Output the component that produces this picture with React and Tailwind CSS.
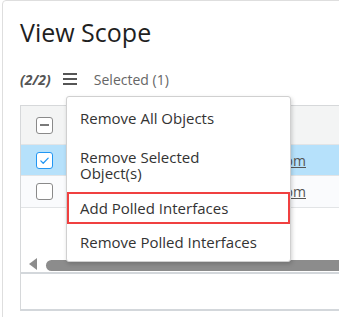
import React from "react";

const font = { fontFamily: '"Open Sans", "Noto Sans", "Liberation Sans", sans-serif' };

const Box = ({ state }) => {
  if (state === "checked") {
    return (
      <span className="flex h-[17px] w-[17px] items-center justify-center rounded-[3px] border-[1.5px] border-[#2196f3] bg-white">
        <svg viewBox="0 0 12 12" className="h-[11px] w-[11px]" fill="none" stroke="#2196f3" strokeWidth="1.4" strokeLinecap="round" strokeLinejoin="round">
          <path d="M2 6.4 4.6 9 10 3.4" />
        </svg>
      </span>
    );
  }
  return (
    <span className="flex h-[17px] w-[17px] items-center justify-center rounded-[3px] border-[1.5px] border-[#8a8a8a] bg-white">
      {state === "mixed" && <span className="h-[2px] w-[9px] bg-[#7a7a7a]" />}
    </span>
  );
};

const Row = ({ bg, state, h, link }) => (
  <div className={`flex items-center border-b border-[#e2e4e6] ${bg} ${h}`}>
    <div className="flex w-[45px] shrink-0 justify-start pl-[15px]">
      <Box state={state} />
    </div>
    {link && (
      <div className="flex w-[240px] shrink-0 justify-end overflow-hidden whitespace-nowrap">
        <span className="text-[14px] text-[#555] underline">poller.example.com</span>
      </div>
    )}
  </div>
);

export default function App() {
  return (
    <div className="relative h-[317px] w-[339px] overflow-hidden bg-white text-[#222]" style={font}>
      <div className="ml-[2px] h-[340px] w-[360px] rounded-[4px] border border-[#dedede] pl-[17px] pt-[14px]">
        <div className="text-[25px] leading-[34px] text-[#1f1f1f]">View Scope</div>
        <div className="mt-[21px] flex h-[18px] items-center text-[14px] text-[#666]">
          <span className="font-bold italic text-[#555]">(2/2)</span>
          <svg viewBox="0 0 14 12" className="ml-[12px] h-[12px] w-[14px]" fill="#555">
            <rect x="0" y="0" width="14" height="2" />
            <rect x="0" y="5" width="14" height="2" />
            <rect x="0" y="10" width="14" height="2" />
          </svg>
          <span className="ml-[17px]">Selected (1)</span>
        </div>
        <div className="mt-[17px] border-l border-t border-[#d6d8da]">
          <Row bg="bg-[#f3f4f4]" state="mixed" h="h-[39px]" />
          <Row bg="bg-[#b6e1fb]" state="checked" h="h-[31px]" link />
          <Row bg="bg-[#fafbfd]" state="none" h="h-[32px]" link />
          <div className="flex h-[66px] items-end border-b-2 border-[#d3d7db] pb-[1px]">
            <div className="ml-[8px] h-0 w-0 border-y-[6px] border-r-[8px] border-y-transparent border-r-[#8c8c8c] mb-[1px]" />
            <div className="ml-[9px] h-[11px] flex-1 rounded-l-[6px] bg-[#8c8c8c]" />
          </div>
          <div className="h-[37px] border-b-2 border-[#d3d7db]" />
        </div>
      </div>

      <div className="absolute left-[66px] top-[96px] flex w-[225px] flex-col rounded-[3px] border border-[#d0d0d0] bg-white text-[15px] text-[#333] shadow-[1px_2px_4px_rgba(0,0,0,0.18)]">
        <div className="flex h-[41px] items-center pl-[13px] pt-[2px]">Remove All Objects</div>
        <div className="flex h-[54px] items-center pl-[13px] leading-[16px]">
          Remove Selected
          <br />
          Object(s)
        </div>
        <div className="flex h-[32px] items-center border-2 border-[#f04040] pl-[11px]">Add Polled Interfaces</div>
        <div className="flex h-[37px] items-center pl-[13px]">Remove Polled Interfaces</div>
      </div>
    </div>
  );
}
